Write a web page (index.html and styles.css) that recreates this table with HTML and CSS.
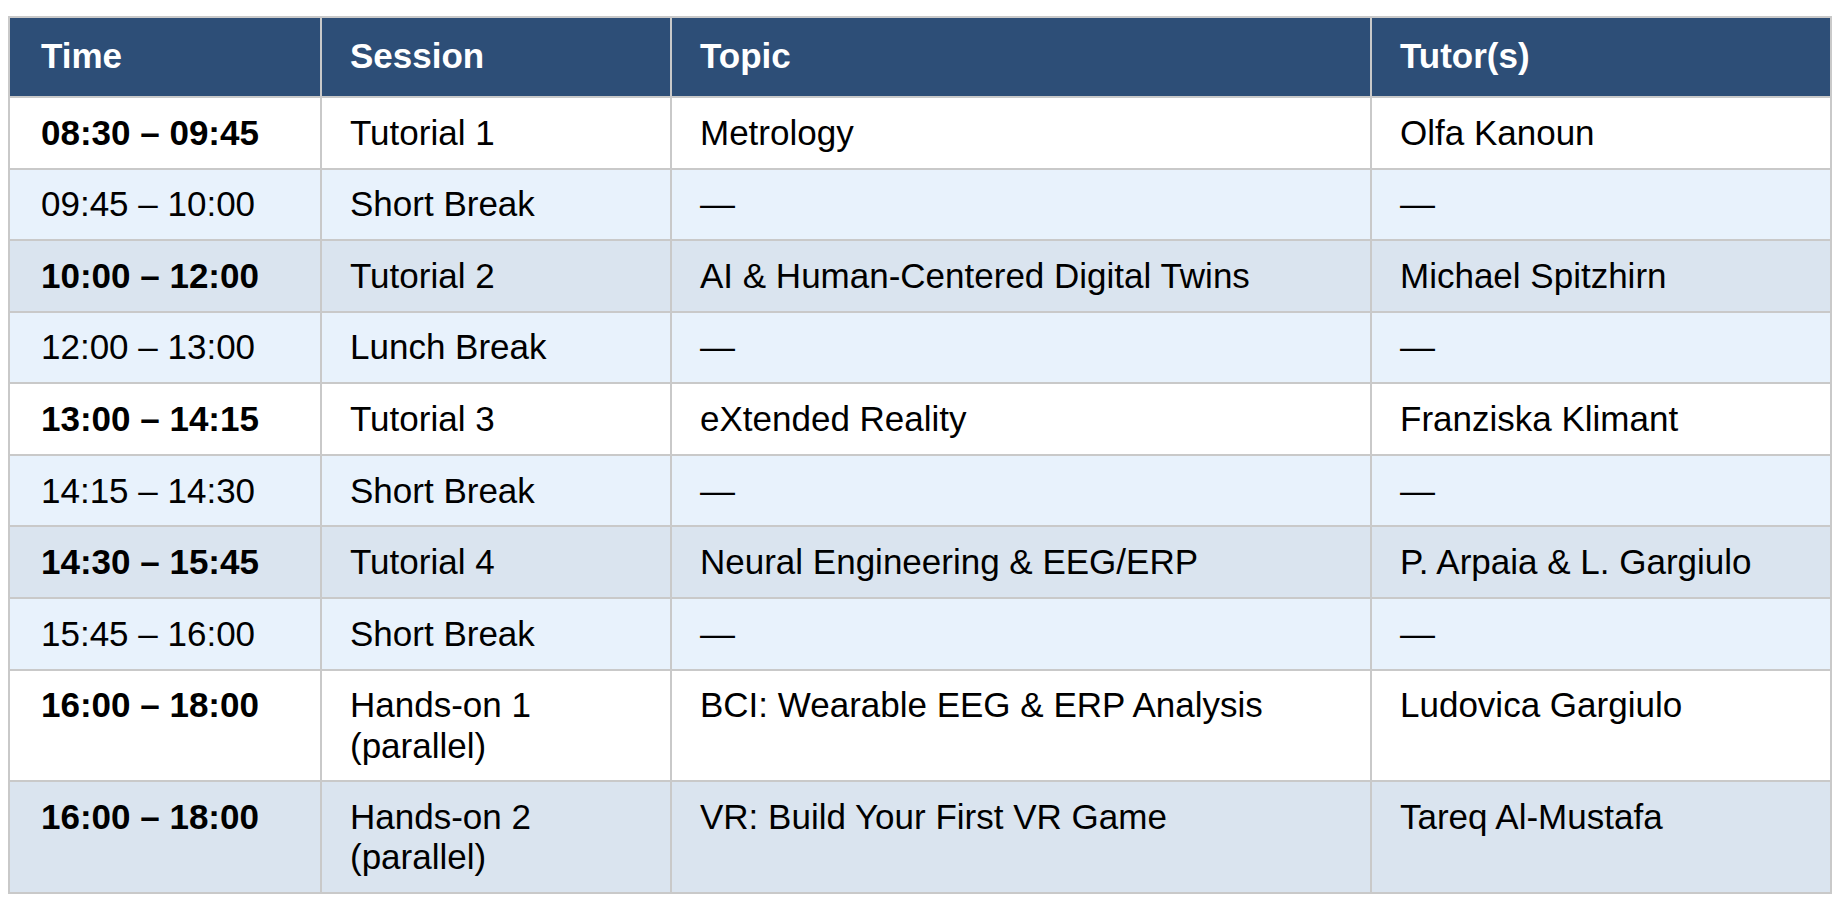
FILE: index.html
```html
<!DOCTYPE html>
<html lang="en">
<head>
<meta charset="utf-8">
<title>Programme</title>
<link rel="stylesheet" href="styles.css">
</head>
<body>
<table class="schedule">
  <colgroup>
    <col class="c-time">
    <col class="c-session">
    <col class="c-topic">
    <col class="c-tutor">
  </colgroup>
  <thead>
    <tr><th class="first">Time</th><th>Session</th><th>Topic</th><th>Tutor(s)</th></tr>
  </thead>
  <tbody>
    <tr class="plain"><td class="first time">08:30 – 09:45</td><td>Tutorial 1</td><td>Metrology</td><td>Olfa Kanoun</td></tr>
    <tr class="brk"><td class="first">09:45 – 10:00</td><td>Short Break</td><td>—</td><td>—</td></tr>
    <tr class="alt"><td class="first time">10:00 – 12:00</td><td>Tutorial 2</td><td>AI &amp; Human-Centered Digital Twins</td><td>Michael Spitzhirn</td></tr>
    <tr class="brk"><td class="first">12:00 – 13:00</td><td>Lunch Break</td><td>—</td><td>—</td></tr>
    <tr class="plain"><td class="first time">13:00 – 14:15</td><td>Tutorial 3</td><td>eXtended Reality</td><td>Franziska Klimant</td></tr>
    <tr class="brk"><td class="first">14:15 – 14:30</td><td>Short Break</td><td>—</td><td>—</td></tr>
    <tr class="alt"><td class="first time">14:30 – 15:45</td><td>Tutorial 4</td><td>Neural Engineering &amp; EEG/ERP</td><td>P. Arpaia &amp; L. Gargiulo</td></tr>
    <tr class="brk"><td class="first">15:45 – 16:00</td><td>Short Break</td><td>—</td><td>—</td></tr>
    <tr class="plain"><td class="first time">16:00 – 18:00</td><td>Hands-on 1<br>(parallel)</td><td>BCI: Wearable EEG &amp; ERP Analysis</td><td>Ludovica Gargiulo</td></tr>
    <tr class="alt"><td class="first time">16:00 – 18:00</td><td>Hands-on 2<br>(parallel)</td><td>VR: Build Your First VR Game</td><td>Tareq Al-Mustafa</td></tr>
  </tbody>
</table>
</body>
</html>
```
FILE: styles.css
```css
html, body {
  background: #ffffff;
}
body {
  margin: 0;
  padding: 16px 10px 8px 8px;
  font-family: "Liberation Sans", Arial, sans-serif;
  color: #000000;
}
.schedule {
  width: 1822px;
  border-collapse: collapse;
  table-layout: fixed;
  border: 2px solid #c9c9c9;
  font-size: 35px;
  line-height: 40.2px;
}
.c-time { width: 312px; }
.c-session { width: 350px; }
.c-topic { width: 700px; }
.c-tutor { width: 460px; }
.schedule th,
.schedule td {
  border: 2px solid #c9c9c9;
  text-align: left;
  vertical-align: top;
  padding: 14.7px 28px 14.7px 28px;
}
.schedule .first {
  padding-left: 31px;
}
.schedule th {
  background: #2d4e77;
  color: #ffffff;
  font-weight: bold;
  padding-top: 18.4px;
  padding-bottom: 19.4px;
}
.schedule .time {
  font-weight: bold;
}
.plain { background: #ffffff; }
.brk { background: #e8f2fc; }
.alt { background: #dae4ef; }
```
